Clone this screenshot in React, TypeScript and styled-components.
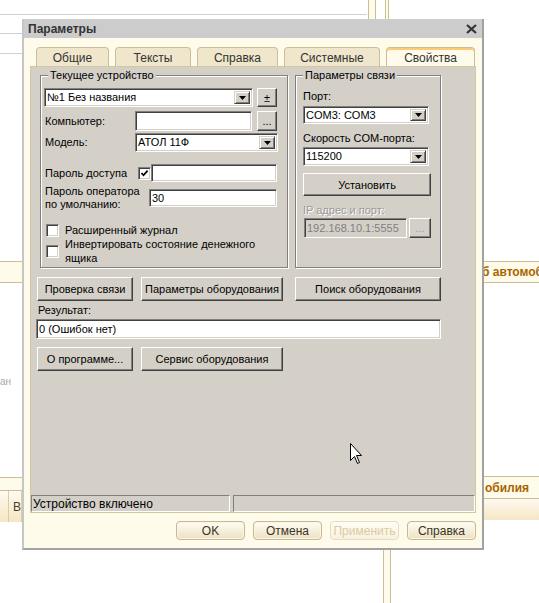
import React from "react";
import styled, { createGlobalStyle } from "styled-components";

const GlobalStyle = createGlobalStyle`
  html, body { margin: 0; padding: 0; background: #ffffff; }
  body { font-family: "Liberation Sans", Arial, sans-serif; font-size: 11px; color: #000; }
  * { box-sizing: border-box; }
`;

const Desktop = styled.div`
  position: relative;
  width: 539px;
  height: 603px;
  overflow: hidden;
  background: #ffffff;
`;

/* ---------- background (the 1C window behind the dialog) ---------- */

const Rule = styled.div<{ $top: number; $left: number; $width: number }>`
  position: absolute;
  top: ${(p) => p.$top}px;
  left: ${(p) => p.$left}px;
  width: ${(p) => p.$width}px;
  height: 1px;
  background: #c9d1da;
`;

const Column = styled.div<{ $top: number; $left: number; $width: number; $height: number }>`
  position: absolute;
  top: ${(p) => p.$top}px;
  left: ${(p) => p.$left}px;
  width: ${(p) => p.$width}px;
  height: ${(p) => p.$height}px;
  border-left: 1px solid #cbbd94;
  border-right: 1px solid #cbbd94;
  background: #fffbea;
`;

const Strip = styled.div<{ $top: number; $left: number; $width: number }>`
  position: absolute;
  top: ${(p) => p.$top}px;
  left: ${(p) => p.$left}px;
  width: ${(p) => p.$width}px;
  display: flex;
  flex-direction: column;
`;

const StripHead = styled.div<{ $h: number; $pl: number }>`
  height: ${(p) => p.$h}px;
  padding-left: ${(p) => p.$pl}px;
  border-top: 1px solid #cbbd94;
  border-bottom: 1px solid #cbbd94;
  background: #fffbea;
  display: flex;
  align-items: center;
  font: bold 12px "Liberation Sans", Arial, sans-serif;
  color: #a86400;
  white-space: nowrap;
  overflow: hidden;
`;

const StripBody = styled.div<{ $h: number }>`
  height: ${(p) => p.$h}px;
  display: flex;
  background: linear-gradient(#fefaf0, #f5e6c4);
`;

const StripCell = styled.div<{ $w: number }>`
  width: ${(p) => p.$w}px;
  border-right: 1px solid #d9cca6;
  display: flex;
  align-items: center;
  padding-left: 4px;
  font: 12px "Liberation Sans", Arial, sans-serif;
  color: #4a3f2a;
`;

const FaintText = styled.div`
  position: absolute;
  top: 376px;
  left: 0;
  font: 10px "Liberation Sans", Arial, sans-serif;
  color: #a8a8a8;
`;

/* ---------- dialog window ---------- */

const Window = styled.div`
  position: absolute;
  left: 22px;
  top: 19px;
  width: 462px;
  height: 531px;
  border-left: 2px solid #c6c6c6;
  border-right: 2px solid #a2a2a2;
  border-bottom: 2px solid #a2a2a2;
  background: #fffbeb;
  display: flex;
  flex-direction: column;
`;

const TitleBar = styled.div`
  height: 19px;
  background: #cccccc;
  display: flex;
  align-items: center;
  justify-content: space-between;
  padding: 0 5px 0 4px;
`;

const TitleText = styled.div`
  font: bold 12px "Liberation Sans", Arial, sans-serif;
  color: #333333;
`;

const Body = styled.div`
  flex: 1;
  display: flex;
  flex-direction: column;
  padding: 9px 6px 0 6px;
`;

const TabStrip = styled.div`
  display: flex;
  gap: 6px;
  padding-left: 6px;
  height: 19px;
`;

const Tab = styled.div<{ $w: number; $active?: boolean }>`
  width: ${(p) => p.$w}px;
  height: 19px;
  border: 1px solid #cbbf99;
  border-bottom: none;
  border-radius: 4px 4px 0 0;
  background: ${(p) => (p.$active ? "#fffbeb" : "#efe6cc")};
  box-shadow: ${(p) => (p.$active ? "inset 0 2px 0 #ffc978" : "none")};
  display: flex;
  align-items: center;
  justify-content: center;
  padding-top: 1px;
  font: 12px "Liberation Sans", Arial, sans-serif;
  color: #333333;
`;

const Panel = styled.div`
  height: 447px;
  border: 1px solid #d3c7a2;
  background: #d4d0c8;
  display: flex;
  flex-direction: column;
`;

const PanelBody = styled.div`
  flex: 1;
  display: flex;
  flex-direction: column;
  padding-top: 8px;
`;

const Row = styled.div<{ $mt?: number; $ml?: number; $gap?: number }>`
  display: flex;
  align-items: center;
  margin-top: ${(p) => p.$mt ?? 0}px;
  margin-left: ${(p) => p.$ml ?? 0}px;
  gap: ${(p) => p.$gap ?? 0}px;
`;

const GroupRow = styled.div`
  display: flex;
  gap: 7px;
  margin-left: 9px;
`;

const GroupBox = styled.div<{ $w: number }>`
  position: relative;
  width: ${(p) => p.$w}px;
  height: 193px;
  border: 1px solid #808080;
  box-shadow: inset 1px 1px 0 #ffffff, 1px 1px 0 #ffffff;
`;

const GroupTitle = styled.div`
  position: absolute;
  top: -7px;
  left: 7px;
  padding: 0 2px;
  line-height: 13px;
  background: #d4d0c8;
  white-space: nowrap;
`;

const GroupInner = styled.div<{ $pl: number; $pt: number }>`
  display: flex;
  flex-direction: column;
  align-items: flex-start;
  padding-left: ${(p) => p.$pl}px;
  padding-top: ${(p) => p.$pt}px;
`;

const Label = styled.div<{ $w: number }>`
  width: ${(p) => p.$w}px;
  flex-shrink: 0;
  line-height: 13px;
  padding-left: 1px;
`;

const Caption = styled.div<{ $mt?: number; $ml?: number; $disabled?: boolean }>`
  margin-top: ${(p) => p.$mt ?? 0}px;
  margin-left: ${(p) => p.$ml ?? 0}px;
  line-height: 13px;
  color: ${(p) => (p.$disabled ? "#9a9a9a" : "#000")};
  text-shadow: ${(p) => (p.$disabled ? "1px 1px 0 #ffffff" : "none")};
`;

const Field = styled.div<{ $w: number; $h: number; $mt?: number; $disabled?: boolean }>`
  width: ${(p) => p.$w}px;
  height: ${(p) => p.$h}px;
  margin-top: ${(p) => p.$mt ?? 0}px;
  flex-shrink: 0;
  background: ${(p) => (p.$disabled ? "#d4d0c8" : "#ffffff")};
  border: 1px solid;
  border-color: #808080 #ffffff #ffffff #808080;
  box-shadow: inset 1px 1px 0 #404040, inset -1px -1px 0 #d4d0c8;
  display: flex;
  align-items: center;
  padding: 2px 2px 2px 2px;
  color: ${(p) => (p.$disabled ? "#808080" : "#000")};
  white-space: nowrap;
  overflow: hidden;
`;

const FieldText = styled.span`
  flex: 1;
  line-height: 13px;
`;

const DropButton = styled.div`
  width: 16px;
  align-self: stretch;
  background: #d4d0c8;
  border: 1px solid;
  border-color: #d4d0c8 #404040 #404040 #d4d0c8;
  box-shadow: inset 1px 1px 0 #ffffff, inset -1px -1px 0 #808080;
  display: flex;
  align-items: center;
  justify-content: center;
`;

const Button = styled.div<{ $w: number; $h: number; $mt?: number; $ml?: number; $disabled?: boolean }>`
  width: ${(p) => p.$w}px;
  height: ${(p) => p.$h}px;
  margin-top: ${(p) => p.$mt ?? 0}px;
  margin-left: ${(p) => p.$ml ?? 0}px;
  flex-shrink: 0;
  background: #d4d0c8;
  border: 1px solid;
  border-color: #ffffff #404040 #404040 #ffffff;
  box-shadow: inset -1px -1px 0 #808080;
  display: flex;
  align-items: center;
  justify-content: center;
  color: ${(p) => (p.$disabled ? "#9a9a9a" : "#000")};
  white-space: nowrap;
`;

const CheckBox = styled.span`
  width: 13px;
  height: 13px;
  flex-shrink: 0;
  background: #ffffff;
  border: 1px solid;
  border-color: #808080 #ffffff #ffffff #808080;
  box-shadow: inset 1px 1px 0 #404040, inset -1px -1px 0 #d4d0c8;
  display: flex;
  align-items: center;
  justify-content: center;
`;

const CheckRow = styled.div<{ $mt?: number }>`
  display: flex;
  align-items: center;
  gap: 6px;
  margin-top: ${(p) => p.$mt ?? 0}px;
  margin-left: 2px;
`;

const CheckText = styled.div`
  line-height: 14px;
`;

const TwoLine = styled.div<{ $w: number }>`
  width: ${(p) => p.$w}px;
  flex-shrink: 0;
  line-height: 13px;
  padding-left: 1px;
`;

const StatusBar = styled.div`
  margin-top: auto;
  height: 17px;
  display: flex;
  gap: 3px;
`;

const StatusCell = styled.div<{ $w?: number }>`
  ${(p) => (p.$w ? `width: ${p.$w}px;` : "flex: 1;")}
  height: 17px;
  border: 1px solid;
  border-color: #808080 #ffffff #ffffff #808080;
  display: flex;
  align-items: center;
  padding-left: 1px;
  font: 12px "Liberation Sans", Arial, sans-serif;
  white-space: nowrap;
`;

const Footer = styled.div`
  flex: 1;
  display: flex;
  justify-content: flex-end;
  align-items: flex-start;
  gap: 8px;
  padding-top: 8px;
`;

const FooterButton = styled.div<{ $disabled?: boolean }>`
  width: 69px;
  height: 19px;
  border-radius: 4px;
  border: 1px solid ${(p) => (p.$disabled ? "#e6dcc2" : "#c6b98f")};
  background: ${(p) =>
    p.$disabled ? "linear-gradient(#fffdf5, #f8f1de)" : "linear-gradient(#fffdf4, #ebe1c4)"};
  box-shadow: ${(p) => (p.$disabled ? "none" : "inset 0 0 0 1px #faf5e4")};
  display: flex;
  align-items: center;
  justify-content: center;
  font: 12px "Liberation Sans", Arial, sans-serif;
  color: ${(p) => (p.$disabled ? "#dccaa4" : "#3c3424")};
`;

const Cursor = styled.svg`
  position: absolute;
  left: 350px;
  top: 443px;
`;

const Triangle = () => (
  <svg width="7" height="4" viewBox="0 0 7 4">
    <path d="M0 0 H7 L3.5 4 Z" fill="#000" />
  </svg>
);

const Check = () => (
  <svg width="9" height="9" viewBox="0 0 9 9">
    <path d="M1.5 4 L3.5 6.3 L7.6 1.6" fill="none" stroke="#000" strokeWidth="1.7" />
  </svg>
);

const Combo = ({ w, h, mt, text }: { w: number; h: number; mt?: number; text: string }) => (
  <Field $w={w} $h={h} $mt={mt}>
    <FieldText>{text}</FieldText>
    <DropButton>
      <Triangle />
    </DropButton>
  </Field>
);

const tabs = [
  { name: "Общие", w: 73 },
  { name: "Тексты", w: 76 },
  { name: "Справка", w: 81 },
  { name: "Системные", w: 96 },
  { name: "Свойства", w: 89, active: true },
];

export default function App() {
  return (
    <>
      <GlobalStyle />
      <Desktop>
        <Rule $top={14} $left={0} $width={367} />
        <Rule $top={33} $left={0} $width={22} />
        <Rule $top={53} $left={0} $width={22} />
        <Column $top={0} $left={368} $width={8} $height={19} />
        <Column $top={0} $left={385} $width={4} $height={19} />
        <Column $top={550} $left={383} $width={8} $height={53} />

        <Strip $top={261} $left={0} $width={22}>
          <StripHead $h={22} $pl={0} />
        </Strip>
        <Strip $top={261} $left={470} $width={69}>
          <StripHead $h={22} $pl={12}>б автомоб</StripHead>
        </Strip>
        <Strip $top={477} $left={0} $width={22}>
          <StripHead $h={14} $pl={0} />
          <StripBody $h={31}>
            <StripCell $w={10} />
            <StripCell $w={14}>В</StripCell>
          </StripBody>
        </Strip>
        <Strip $top={476} $left={470} $width={69}>
          <StripHead $h={23} $pl={15}>обилия</StripHead>
          <StripBody $h={21} />
        </Strip>
        <FaintText>ан</FaintText>

        <Window>
          <TitleBar>
            <TitleText>Параметры</TitleText>
            <svg width="11" height="10" viewBox="0 0 11 10">
              <path d="M1 1 L10 9 M10 1 L1 9" stroke="#333" strokeWidth="2.2" />
            </svg>
          </TitleBar>
          <Body>
            <TabStrip>
              {tabs.map((t) => (
                <Tab key={t.name} $w={t.w} $active={t.active}>
                  {t.name}
                </Tab>
              ))}
            </TabStrip>
            <Panel>
              <PanelBody>
                <GroupRow>
                  <GroupBox $w={248}>
                    <GroupTitle>Текущее устройство</GroupTitle>
                    <GroupInner $pl={3} $pt={12}>
                      <Row $gap={4}>
                        <Combo w={209} h={19} text="№1 Без названия" />
                        <Button $w={20} $h={19}>±</Button>
                      </Row>
                      <Row $mt={4}>
                        <Label $w={91}>Компьютер:</Label>
                        <Field $w={117} $h={20} />
                        <Button $w={20} $h={20} $ml={5}>...</Button>
                      </Row>
                      <Row $mt={2}>
                        <Label $w={91}>Модель:</Label>
                        <Combo w={143} h={19} text="АТОЛ 11Ф" />
                      </Row>
                      <Row $mt={12}>
                        <Label $w={94}>Пароль доступа</Label>
                        <CheckBox>
                          <Check />
                        </CheckBox>
                        <Field $w={126} $h={18} />
                      </Row>
                      <Row $mt={3}>
                        <TwoLine $w={105}>
                          Пароль оператора
                          <br />
                          по умолчанию:
                        </TwoLine>
                        <Field $w={128} $h={18}>
                          <FieldText>30</FieldText>
                        </Field>
                      </Row>
                      <CheckRow $mt={12}>
                        <CheckBox />
                        <CheckText>Расширенный журнал</CheckText>
                      </CheckRow>
                      <CheckRow>
                        <CheckBox />
                        <CheckText>
                          Инвертировать состояние денежного
                          <br />
                          ящика
                        </CheckText>
                      </CheckRow>
                    </GroupInner>
                  </GroupBox>
                  <GroupBox $w={146}>
                    <GroupTitle>Параметры связи</GroupTitle>
                    <GroupInner $pl={7} $pt={14}>
                      <Caption>Порт:</Caption>
                      <Combo w={126} h={18} mt={3} text="COM3: COM3" />
                      <Caption $mt={8}>Скорость COM-порта:</Caption>
                      <Combo w={126} h={19} mt={2} text="115200" />
                      <Button $w={128} $h={23} $mt={7}>Установить</Button>
                      <Caption $mt={8} $disabled>IP адрес и порт:</Caption>
                      <Row $mt={1} $ml={1} $gap={2}>
                        <Field $w={103} $h={20} $disabled>
                          <FieldText>192.168.10.1:5555</FieldText>
                        </Field>
                        <Button $w={22} $h={20} $disabled>...</Button>
                      </Row>
                    </GroupInner>
                  </GroupBox>
                </GroupRow>

                <Row $mt={9} $ml={6} $gap={8}>
                  <Button $w={96} $h={24}>Проверка связи</Button>
                  <Button $w={142} $h={24}>Параметры оборудования</Button>
                  <Button $w={146} $h={24} $ml={4}>Поиск оборудования</Button>
                </Row>
                <Caption $mt={3} $ml={7}>Результат:</Caption>
                <Row $mt={2} $ml={5}>
                  <Field $w={405} $h={20}>
                    <FieldText>0 (Ошибок нет)</FieldText>
                  </Field>
                </Row>
                <Row $mt={8} $ml={6} $gap={8}>
                  <Button $w={96} $h={24}>О программе...</Button>
                  <Button $w={142} $h={24}>Сервис оборудования</Button>
                </Row>

                <StatusBar>
                  <StatusCell $w={199}>Устройство включено</StatusCell>
                  <StatusCell />
                </StatusBar>
              </PanelBody>
            </Panel>
            <Footer>
              <FooterButton>OK</FooterButton>
              <FooterButton>Отмена</FooterButton>
              <FooterButton $disabled>Применить</FooterButton>
              <FooterButton>Справка</FooterButton>
            </Footer>
          </Body>
        </Window>

        <Cursor width="13" height="22" viewBox="0 0 13 22">
          <path
            d="M0.5 0.5 L0.5 17.5 L4.5 13.5 L7.5 20.5 L9.5 19.5 L6.5 12.5 L11.5 12.5 Z"
            fill="#fff"
            stroke="#000"
            strokeWidth="1"
          />
        </Cursor>
      </Desktop>
    </>
  );
}
